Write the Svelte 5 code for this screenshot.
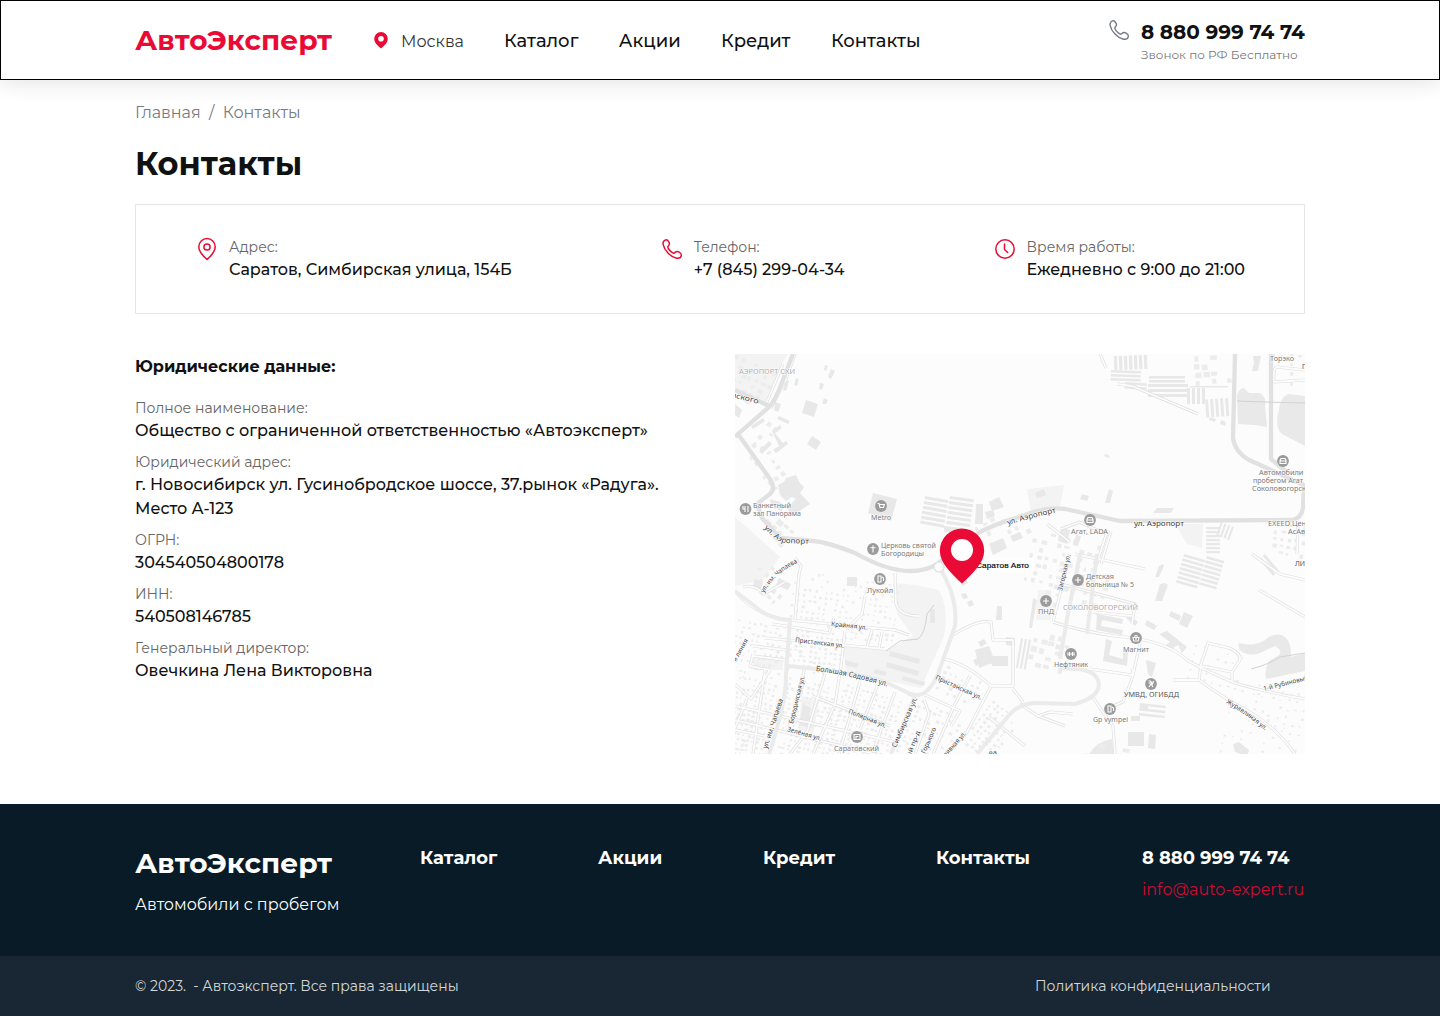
<script>
  const nav = ['Каталог', 'Акции', 'Кредит', 'Контакты'];
  const legal = [
    { label: 'Полное наименование:', value: 'Общество с ограниченной ответственностью «Автоэксперт»' },
    { label: 'Юридический адрес:', value: 'г. Новосибирск ул. Гусинобродское шоссе, 37.рынок «Радуга». Место А-123' },
    { label: 'ОГРН:', value: '304540504800178' },
    { label: 'ИНН:', value: '540508146785' },
    { label: 'Генеральный директор:', value: 'Овечкина Лена Викторовна' }
  ];
  const handset = 'M1.2 5.6C.7 3.6 1.6 1.4 3.6.9c1.200-.3 2.300.4 3.200 1.900 1 1.700.8 3-.3 4-.9.8-.9 1.500-.2 2.700 1 1.800 2.300 3.100 4 4.200 1.100.7 1.800.700 2.600-.1 1.200-1.200 2.500-1.400 4.200-.4 1.700 1 2.500 2.100 2.200 3.400-.5 2.100-2.600 3-4.800 2.600C8.300 17.900 2.400 11.300 1.200 5.600Z';

  let seed = 11;
  const rnd = () => ((seed = (seed * 16807) % 2147483647) / 2147483647);

  // City blocks: [x, y, width, height, rotation, step, house size, density]
  const blocks = [
    [-8, 262, 70, 60, 12, 5.500, 2.400, 0.6], [60, 216, 105, 52, 8, 5.500, 2.300, 0.55],
    [56, 274, 55, 42, 6, 5, 2.400, 0.75], [110, 272, 50, 14, 3, 5, 2.400, 0.75],
    [4, 322, 44, 80, 12, 5, 2.400, 0.75], [54, 322, 60, 80, 14, 5, 2.400, 0.75], [112, 330, 60, 74, 17, 5, 2.400, 0.75],
    [-6, 350, 30, 60, 12, 5, 2.400, 0.7], [186, 345, 50, 56, 26, 5.500, 2.600, 0.65],
    [212, 310, 40, 30, 26, 6, 3, 0.6], [258, 345, 36, 50, 38, 5.500, 2.600, 0.7],
    [500, 325, 75, 75, 12, 8, 2.200, 0.5], [460, 290, 50, 40, 14, 8, 2, 0.4],
    [222, 182, 70, 30, -28, 9, 4, 0.4], [300, 175, 66, 50, 14, 8, 4, 0.6],
    [8, 96, 22, 50, -35, 8, 4, 0.6], [38, 60, 12, 40, 35, 8, 4, 0.6], [0, 0, 44, 42, 24, 7, 4, 0.6], [38, 158, 30, 26, 42, 8, 5, 0.6],
    [340, 385, 60, 16, 10, 12, 5, 0.5], [520, 330, 48, 40, 12, 9, 1.800, 0.4], [458, 2, 34, 28, -4, 8, 5, 0.55],
    [540, 168, 40, 34, 8, 7, 3.500, 0.7], [300, 275, 34, 40, 14, 8, 5, 0.6], [30, 206, 40, 30, 40, 8, 4, 0.5],
    [536, 0, 34, 30, 0, 9, 3, 0.5], [318, 210, 60, 44, 14, 9, 4, 0.5]
  ];
  const houses = blocks.map(([x, y, w, h, r, step, size, density]) => {
    let d = '';
    for (let v = 0; v < h; v += step)
      for (let u = 0; u < w; u += step)
        if (rnd() < density) {
          const a = size * (0.6 + rnd() * 0.8), b = size * (0.6 + rnd() * 0.6);
          d += `M${(u + rnd() * 1.5).toFixed(1)} ${(v + rnd() * 1.5).toFixed(1)}h${a.toFixed(1)}v${b.toFixed(1)}h-${a.toFixed(1)}z`;
        }
    return { d, t: `translate(${x} ${y}) rotate(${r})` };
  });

  // Rows of garages: [x, y, width, height, rotation, pitch, bar]
  const garages = [
    [412, 1, 14, 34, 88, 5, 3.200], [376, 16, 30, 12, 2, 4, 2.500], [390, 28, 22, 5, 4, 4, 2.500],
    [413, 30, 40, 15, 0, 5, 3], [414, 22, 36, 6, 0, 4, 2.500], [455, 32, 38, 4, 0, 5, 1.500], [470, 34, 16, 18, 90, 5, 3], [493, 44, 18, 24, 86, 5, 3],
    [190, 142, 24, 28, 10, 5, 3], [215, 142, 24, 28, 8, 5, 3],
    [449, 200, 22, 28, 16, 4.500, 2.600], [472, 202, 18, 30, 16, 4.500, 2.600], [471, 173, 14, 28, 0, 4, 2.200], [499, 173, 14, 14, 110, 4, 2.200],
    [296, 286, 30, 12, 100, 4, 2.200], [530, 200, 22, 10, 50, 5, 3], [405, 349, 26, 11, 6, 5, 2.500]
  ].map(([x, y, w, h, r, pitch, bar]) => {
    let d = '';
    for (let v = 0; v < h; v += pitch) d += `M0 ${v}h${w}v${bar}h-${w}z`;
    return { d, t: `translate(${x} ${y}) rotate(${r})` };
  });

  const buildings = [
    'M71 46l12 4-4 13-12-4z', 'M77 82l9 6-5 8-9-6z', 'M43 131l6-3 2-4 10-3 3 7 5 5-4 6 10 11-18 12-5-8 9-9-4-2-6 4-6-6z', 'M138 139l24 6-6 22-23-8z',
    'M112 223h10v9h-10z', 'M254 190l14-6 4 10-14 7z', 'M275 182l10-4 3 6-10 4z', 'M254 148l10-5 5 10-12 4z', 'M241 150h7v20h-8z',
    'M40 48l6 2-3 8-4-2z', 'M0 50l7 6-3 8-4-3z', 'M35 145l10 3 4 4-3 6-10-8z', 'M16 72l12-8 2 3-12 8z', 'M24 97l10-10 3 3-10 10z',
    'M44 62l11 5-2 3-11-5z', 'M37 77l8-6 2 3-7 5 8 10 3-2 2 3-12 9-3-3 6-4z', 'M96 15l4 2-4 8-3-2zM90 11l3 1-2 5-2-1zM85 29l4 1-2 6-3-1zM89 44l4 2-2 4-4 0z', 'M61 24l3 1-2 7-3-1zM50 26l4 1-3 10-3-1z',
    'M68 350l8 4-2 8 4 2-2 10-12-3 2-10z', 'M209 172l18 2-1 6-17-2z', 'M250 158l8-2 2 6-8 3zM263 168l6-3 2 4-6 3z',
    'M110 306l14 4-2 4-12-3zM140 315l12 3-2 4-12-3z', 'M155 297l30 8-1 5-30-8zM152 308l32 9-1 5-32-9zM168 322l22 6-1 4-22-6z',
    'M195 255h5v14h-5z', 'M20 225l8 3-3 9-8-3zM44 224l12 6-3 6-12-5z', 'M240 296l14-4 6 16-16 6zM255 302h18v10h-16z', 'M243 288l6-3 3 4-6 4zM238 306l5-2 3 5-5 3z',
    'M262 252h5v14h-6z', 'M271 283l9 1v8l-9-1z', 'M362 260l26 5-1 5-20-4-1 6 22 4-1 5-26-5z', 'M371 285l6 2-3 14 14 4v-8l5 1-1 14-24-5z',
    'M449 258l9 4-6 12-8-4z', 'M436 257l10 5-2 5-10-5z', 'M425 230l5-1 3 2-6 16h-7z', 'M424 212l4-2 1 2-5 11h-4z',
    'M393 260l10 8-3 4-9-8zM412 266l10 6-3 4-9-5z', 'M424 280l8-3 20 16-5 6-4-8-8 5-4-5 4-3z', 'M411 306l10 3-4 14-4-2z',
    'M393 378h16v14h-16zM414 380l7 1-1 14-7-1z', 'M405 350h8v6h-8zM396 362h9v5h-9z', 'M498 390l6-2 10 8-2 6-12-4z',
    'M422 154h17l-3 5h-18z', 'M378 137l-3 12h-5l4-14z', 'M326 173l9 3-3 14-9-3z', 'M341 181l5 1-3 10-5-1z',
    'M518 2h8l-3 15h-6l2-8z', 'M298 244l4 2-5 28h-3z', 'M347 140l7 2-2 5-7-2z', 'M300 139l9-4 2 6-9 3z', 'M370 100l5 2-1 2-5-2z',
    'M224 205l4-2 3 6-4 2zM225 228l6-3 2 4-6 3zM226 240l5-1 2 5-5 1zM232 248l5-2 2 5-5 2z', 'M475 63l6 2-1 3-6-2zM486 66l5 2-1 4-5-2z'
  ];

  const minor = [
    'M0 237Q20 262 55 266L160 276 174 281', 'M60 265L64 220 66 212 60 204', 'M160 219L161 250Q165 262 184 262', 'M8 233Q20 230 29 240L50 228',
    'M130 242L127 260 112 275', 'M110 277L106 312 100 350 78 400', 'M37 270L94 279 99 264', 'M30 284L150 295', 'M147 278L144 294M137 276L132 293',
    'M18 292L52 296M18 302L50 306', 'M35 316L16 345 0 330M18 300L15 312 35 316', 'M69 315L66 340M90 320L72 378 55 400', 'M12 345L0 374M30 316L18 400',
    'M0 352L160 388M0 366L140 400', 'M77 342L155 372', 'M125 328L104 400M142 333L125 375M160 338L138 398',
    'M210 305Q232 310 256 332H278V286H258L256 268Q243 265 218 281', 'M256 332L232 378 212 400', 'M235 322L220 350 198 400', 'M278 335L288 348', 'M190 341L225 357 216 372',
    'M189 345L194 360 180 400', 'M254 363L290 392', 'M318 268Q345 277 380 282 430 286 451 305 460 312 500 329 530 338 570 345',
    'M318 268L335 200M335 188L312 170M326 175L345 168M344 168L372 180', 'M340 200L410 215M326 230L400 250 397 270M358 258L396 262',
    'M405 290L397 325 388 348 370 355', 'M355 315L397 321 398 315', 'M358 343L365 354 378 372 380 400',
    'M438 326H464L466 310 473 289 494 294Q506 299 505 306L497 318 466 312M497 318V328', 'M464 326Q490 345 510 355 540 372 560 400',
    'M524 236L570 263', 'M285 350L303 362 315 358 338 360M303 362L330 372', 'M0 376L30 382', 'M376 177L366 210M372 178L361 212',
    'M570 16L542 13Q538 13 539 28L570 26', 'M563 168L562 200', 'M365 0L371 14M382 30L397 32 430 46 463 60', 'M48 10L31 50M53 20L36 54M60 0L50 28', 'M517 200L545 220 570 226'
  ];
  const streets = [
    'M58 0L46 31Q40 47 34 53L3 80 0 83M3 80L35 125Q41 134 35 140L22 150 27 164 45 184 78 187Q92 188 120 199 152 217 175 217 192 217 202 210L240 181Q258 170 285 163 310 152 330 155L385 167 557 166Q567 164 568 153L569 130',
    'M0 36L34 52', 'M500 0L498 84Q500 98 514 106L569 131', 'M536 0V105L552 118'
  ];
  const avenues = [
    'M206 216Q223 245 220 272L203 320Q194 340 183 341L173 340', 'M52 312Q115 318 148 327L180 342 156 400', 'M0 237L22 254Q34 265 55 266L51 320Q52 345 34 400',
    'M242 400L275 360Q284 350 300 349L340 350Q368 342 363 326 358 315 338 315L325 314', 'M345 200L332 265 325 305', 'M362 200L352 280'
  ];

  // Place markers: [x, y, glyph]
  const places = [
    [10.5, 155, 'M-2.500-3v3h2v3M-2.500-3v3M-.5-3v3M2.500-3v6'], [146, 152, 'M-3.500-2.500h1.500l1 4h3.500l.8-3h-4.500M-1 2.800h.1M2 2.800h.1'],
    [138, 195, 'M0-3.500v7M-2.500-1.200h5'], [355, 166, 'M-3 2.500v-3l1-2h4l1 2v3zM-3 0h6'], [548, 107, 'M-3 2.500v-3l1-2h4l1 2v3zM-3 0h6'],
    [145, 225, 'M-2 3v-6h3v6zM2-2l1.500 1v3'], [343, 226, 'M0-3v6M-3 0h6'], [311, 247, 'M0-3v6M-3 0h6'], [401, 284, 'M-3-.5h6l-.8 3.500h-4.400zM-1.500-1l1-2M1.500-1l-1-2M0 0v2'],
    [336, 300, 'M-3-1.500v3M-1.500-2v4M-1.500 0h3M1.500-2v4M3-1.500v3'], [416, 330, 'M-2.500-3h2l2 3 1-3M-2 3l2-3 2 3M-2.500-1h5'],
    [375, 355, 'M-2 3v-6h3v6zM2-2l1.500 1v3'], [122, 383, 'M-3-2.500h6v5h-6zM-1 2.500v-3h2.500']
  ];
  // Captions: [text, x, y, length, size, kind]
  const captions = [
    ['АЭРОПОРТ СХИ', 4, 20, 56, 7, 'area'], ['СОКОЛОВОГОРСКИЙ', 328, 256, 75, 7, 'area'],
    ['Банкетный', 18, 154, 38, 7, ''], ['зал Панорама', 18, 162, 48, 7, ''], ['Metro', 136, 166, 20, 7, ''],
    ['Церковь святой', 146, 194, 55, 7, ''], ['Богородицы', 146, 202, 43, 7, ''], ['Лукойл', 132, 239, 26, 7, ''],
    ['Агат, LADA', 336, 180, 37, 7, ''], ['Торэко', 535, 7, 24, 7, ''], ['Автомобили с', 524, 121, 50, 7, ''],
    ['пробегом Агат', 518, 129, 50, 7, ''], ['Соколовогорск', 517, 137, 54, 7, ''], ['EXEED Центр', 533, 172, 46, 7, ''], ['АсАвто', 553, 180, 25, 7, ''],
    ['Детская', 351, 225, 28, 7, ''], ['больница № 5', 351, 233, 48, 7, ''], ['ПНД', 303, 260, 16, 7, ''], ['Магнит', 388, 298, 26, 7, ''],
    ['Нефтяник', 319, 313, 34, 7, ''], ['УМВД, ОГИБДД', 389, 343, 55, 7.200, 'dark'], ['Gp vympel', 358, 368, 35, 7, ''], ['Саратовский', 99, 397, 45, 7, ''],
    ['Саратовский', 107, 405, 36, 7, ''], ['ЛИ', 560, 212, 10, 7, 'dark'], ['П', 567, 15, 5, 7, 'dark'], ['ул. Аэропорт', 399, 172, 50, 7.500, 'road']
  ];
  // Street names that follow a line: [text, path, length, size]
  const names = [
    ['вского', 'M-4 43L24 50', 28, 7.500], ['ул. Аэропорт', 'M29 174Q42 188 50 189L78 190', 50, 7.500], ['ул. Аэропорт', 'M273 171Q295 164 323 158', 50, 7.500],
    ['ул. им. Чапаева', 'M29 239Q40 219 64 208', 46, 6.500], ['Крайняя ул.', 'M96 272L134 276', 36, 6.500], ['Пристанская ул.', 'M60 288L110 294', 49, 6.500],
    ['Большая Садовая ул.', 'M81 317Q110 320 154 333', 73, 7.500], ['ул. им. Чапаева', 'M32 395L49 343', 52, 7], ['Бородинская ул.', 'M58 370L70 321', 49, 6.500],
    ['Полярная ул.', 'M113 359L153 375', 40, 6.500], ['Зелёная ул.', 'M52 377L90 388', 35, 6.500], ['Симбирская ул.', 'M161 394L184 341', 54, 7],
    ['одный пр-д', 'M170 416L187 373', 41, 6.300], ['Горького', 'M190 400L203 371', 28, 6.500], ['Пристанская ул.', 'M200 325L248 347', 50, 6.500], ['ливная ул.', 'M211 403L234 377', 31, 6.500],
    ['я линия', 'M1 308L15 283', 25, 6.500], ['Загорная ул.', 'M327 237L336 199', 37, 6.500], ['Журавлиная ул.', 'M491 349Q510 359 533 379', 48, 6.500],
    ['1-й Рубиновый', 'M529 337L576 325', 46, 6.500], ['ва', 'M254 401L264 400', 8, 6]
  ];
</script>

<svelte:head><title>Контакты — АвтоЭксперт</title></svelte:head>

<div class="page">
  <header>
    <a class="logo">АвтоЭксперт</a>
    <div class="city">
      <svg width="14" height="17" viewBox="0 0 14 17"><path fill="#e90b35" fill-rule="evenodd" d="M7 0a6.800 6.800 0 0 0-6.800 6.800C.2 10.800 4 14 7 16.600c3-2.600 6.800-5.800 6.800-9.800A6.800 6.800 0 0 0 7 0Zm0 4a2.800 2.800 0 1 1 0 5.600A2.800 2.800 0 0 1 7 4Z" /></svg>
      <span>Москва</span>
    </div>
    <nav class="top-nav">
      {#each nav as name}<a>{name}</a>{/each}
    </nav>
    <div class="call">
      <svg width="21" height="21" viewBox="0 0 21 21"><path d={handset} fill="none" stroke="#777b84" stroke-width="1.400" /></svg>
      <div class="call-text">
        <b>8 880 999 74 74</b>
        <small>Звонок по РФ Бесплатно</small>
      </div>
    </div>
  </header>

  <main>
    <div class="crumbs"><a>Главная</a><span class="slash">/</span><span>Контакты</span></div>
    <h1>Контакты</h1>

    <section class="info">
      <div class="item">
        <svg width="24" height="24" viewBox="0 0 24 24"><path d="M12 22.500C8 19 3.800 15 3.800 9.800a8.200 8.200 0 0 1 16.400 0C20.200 15 16 19 12 22.500Z" /><circle cx="12" cy="10" r="3.100" /></svg>
        <div><p class="label">Адрес:</p><p class="value">Саратов, Симбирская улица, 154Б</p></div>
      </div>
      <div class="item">
        <svg width="24" height="24" viewBox="0 0 24 24"><path transform="translate(2 2)" d={handset} /></svg>
        <div><p class="label">Телефон:</p><p class="value">+7 (845) 299-04-34</p></div>
      </div>
      <div class="item">
        <svg width="24" height="24" viewBox="0 0 24 24"><circle cx="12" cy="12" r="9.200" /><path d="M11.500 7v5.500l3.200 3" /></svg>
        <div><p class="label">Время работы:</p><p class="value">Ежедневно с 9:00 до 21:00</p></div>
      </div>
    </section>

    <section class="details">
      <div class="legal">
        <h2>Юридические данные:</h2>
        {#each legal as row}
          <div>
            <p class="label">{row.label}</p>
            <p class="value">{row.value}</p>
          </div>
        {/each}
      </div>

      <svg class="map" width="570" height="400" viewBox="0 0 570 400">
        <rect width="570" height="400" fill="#fcfcfc" />
        <g fill="#f3f3f3">
          <path d="M0 163Q20 180 45 203L28 226 0 232Z" />
          <path d="M158 229Q180 230 204 236 214 255 209 282L186 334 110 318 109 292 152 296 178 282 162 260Z" />
          <path d="M0 0H52L30 48 0 36Z" /><path d="M292 135L329 131 325 152 296 159Z" /><path d="M440 170H468L467 194 452 190Z" />
          <path d="M303 236H316V266H301Z" /><path d="M18 304L48 305V316H18Z" /><path d="M67 342L84 347 78 380 63 375Z" />
        </g>
        <g fill="#e9e9e9">
          <path d="M502 42Q504 34 509 34L514 39 525 39Q532 44 530 52L532 73 520 71 503 70Z" />
          <path d="M570 42L553 40Q545 44 544 56 539 73 547 80L570 92Z" />
          <path d="M504 289Q502 298 512 300 521 302 531 296L540 292Q548 297 544 301L534 307Q529 316 531 325L570 317V299L556 303Q557 286 547 281 537 279 530 286 519 293 504 289Z" />
          <path d="M354 400Q362 387 377 385L379 400Z" />
        </g>
        <g fill="#ececec">{#each houses as h}<path d={h.d} transform={h.t} />{/each}</g>
        <g fill="#e8e8e8">
          {#each garages as g}<path d={g.d} transform={g.t} />{/each}
          {#each buildings as d}<path {d} />{/each}
        </g>
        <g fill="none" stroke-linejoin="round">
          <g stroke="#dedede" stroke-width="3">{#each minor as d}<path {d} />{/each}</g>
          <g stroke="#fcfcfc" stroke-width="1.800">{#each minor as d}<path {d} />{/each}</g>
          <g stroke="#ebebeb" stroke-width="4">{#each avenues as d}<path {d} />{/each}</g>
          <g stroke="#e1e1e1" stroke-width="4.300">{#each streets as d}<path {d} />{/each}</g>
          <path stroke="#d2d2d2" d="M199 251L192 260Q190 280 183 285L165 287 151 297M502 47L530 48 570 49M516 315Q535 310 545 303L570 299" />
          <circle cx="204" cy="213" r="5" fill="#fcfcfc" stroke="#e3e3e3" stroke-width="1.500" />
        </g>
        {#each captions as [text, x, y, len, size, kind]}
          <text class="cap {kind}" {x} {y} textLength={len} lengthAdjust="spacingAndGlyphs" font-size={size}>{text}</text>
        {/each}
        {#each names as [text, d, len, size], i}
          <path id="street-{i}" {d} fill="none" />
          <text class="cap road" font-size={size}><textPath href="#street-{i}" textLength={len} lengthAdjust="spacingAndGlyphs">{text}</textPath></text>
        {/each}
        {#each places as [x, y, d]}
          <g transform="translate({x} {y})"><circle r="5.900" fill="#9b9b9b" /><path {d} fill="none" stroke="#fff" stroke-width="1.100" /></g>
        {/each}
        <rect x="240" y="204" width="59" height="14" fill="#fff" />
        <text class="salon" x="241" y="214" textLength="53" lengthAdjust="spacingAndGlyphs">Саратов Авто</text>
        <path fill="#e90b35" fill-rule="evenodd" d="M227 174.500a22.200 22.200 0 0 0-22.200 22.200C204.800 209 216 219 227 229.500 238 219 249.200 209 249.200 196.700A22.200 22.200 0 0 0 227 174.500Z" />
        <circle cx="227" cy="196" r="11" fill="#fff" />
      </svg>
    </section>
  </main>

  <footer>
    <div class="foot-main">
      <div class="brand">
        <a class="logo">АвтоЭксперт</a>
        <p>Автомобили с пробегом</p>
      </div>
      {#each nav as name}<a class="foot-link">{name}</a>{/each}
      <div class="reach">
        <b class="foot-link">8 880 999 74 74</b>
        <a class="mail">info@auto-expert.ru</a>
      </div>
    </div>
    <div class="foot-bottom">
      <span>© 2023.&nbsp; - Автоэксперт. Все права защищены</span>
      <a class="policy">Политика конфиденциальности</a>
    </div>
  </footer>
</div>

<style>
  :global(body) { background: #fff; }
  .page { width: 1440px; height: 1016px; overflow: hidden; display: flex; flex-direction: column; font-family: Montserrat, Inter, 'Open Sans', sans-serif; color: #111; }
  .page :global(*) { box-sizing: border-box; }
  p, h1, h2 { margin: 0; }

  header { height: 80px; flex: none; border: 1px solid #000; padding: 0 134px; display: flex; align-items: center; box-shadow: 0 4px 20px rgba(0, 0, 0, 0.1); background: #fff; white-space: nowrap; }
  .logo { display: block; width: 196px; font-size: 28px; line-height: 34px; font-weight: 700; color: #e90b35; white-space: nowrap; }
  .city { display: flex; align-items: center; gap: 13px; width: 90px; margin-left: 43px; font-size: 16px; line-height: 24px; color: #333; padding-top: 4px; }
  .city svg { margin-top: -4px; }
  .top-nav { display: flex; gap: 40.4px; margin-left: 40px; font-size: 18px; line-height: 24px; font-weight: 500; padding-top: 2px; }
  .call { margin-left: auto; display: flex; gap: 11px; padding-top: 4px; }
  .call > svg { margin-top: 0; }
  .call-text { display: flex; flex-direction: column; width: 164px; }
  .call b { font-size: 20px; line-height: 24px; font-weight: 700; }
  .call small { font-size: 12px; line-height: 20px; color: #777; margin-top: 1px; }

  main { padding: 0 135px; height: 724px; flex: none; }
  .crumbs { display: flex; padding-top: 21px; font-size: 16px; line-height: 24px; color: #777b84; }
  .slash { width: 22px; text-align: center; }
  h1 { font-size: 32px; line-height: 40px; margin-top: 19px; font-weight: 700; }
  .info { height: 110px; margin-top: 20px; border: 1px solid #e6e6e6; padding: 32px 59px 0; display: flex; justify-content: space-between; }
  .item { display: flex; gap: 10px; }
  .item svg { fill: none; stroke: #e90b35; stroke-width: 1.500; stroke-linecap: round; stroke-linejoin: round; }
  .label { font-size: 14px; line-height: 20px; color: #666; }
  .value { font-size: 16px; line-height: 24px; font-weight: 500; padding-top: 1px; margin-bottom: -1px; }

  .details { display: grid; grid-template-columns: 570px 570px; gap: 30px; margin-top: 40px; }
  .legal { display: flex; flex-direction: column; gap: 10px; }
  h2 { font-size: 16px; line-height: 24px; font-weight: 700; padding-top: 1px; margin-bottom: 9px; }
  .map { display: block; }
  .cap { font-family: 'Noto Sans', sans-serif; fill: #7c7c7c; stroke: #fcfcfc; stroke-width: 1px; paint-order: stroke; }
  .cap.area { fill: #adadad; }
  .cap.dark { fill: #555; }
  .cap.road { fill: #444; }
  .salon { font: 500 8px 'Liberation Sans', sans-serif; fill: #000; stroke: #000; stroke-width: 0.15px; }

  footer { color: #fff; }
  .foot-main { height: 152px; background: #091b26; padding: 42px 135px 0; display: grid; grid-template-columns: 285px 178px 165px 173px 206px auto; align-items: start; }
  .foot-main .logo { color: #fff; }
  .brand p { font-size: 16px; line-height: 24px; margin-top: 13px; white-space: nowrap; }
  .foot-link { display: block; font-size: 18px; line-height: 24px; font-weight: 700; white-space: nowrap; }
  .mail { display: block; font-size: 16px; line-height: 24px; color: #cc0c35; margin-top: 8px; }
  .foot-bottom { height: 60px; background: #182733; padding: 0 135px; display: flex; justify-content: space-between; align-items: center; font-size: 14px; color: #d3d7da; }
  .policy { width: 270px; }
</style>
